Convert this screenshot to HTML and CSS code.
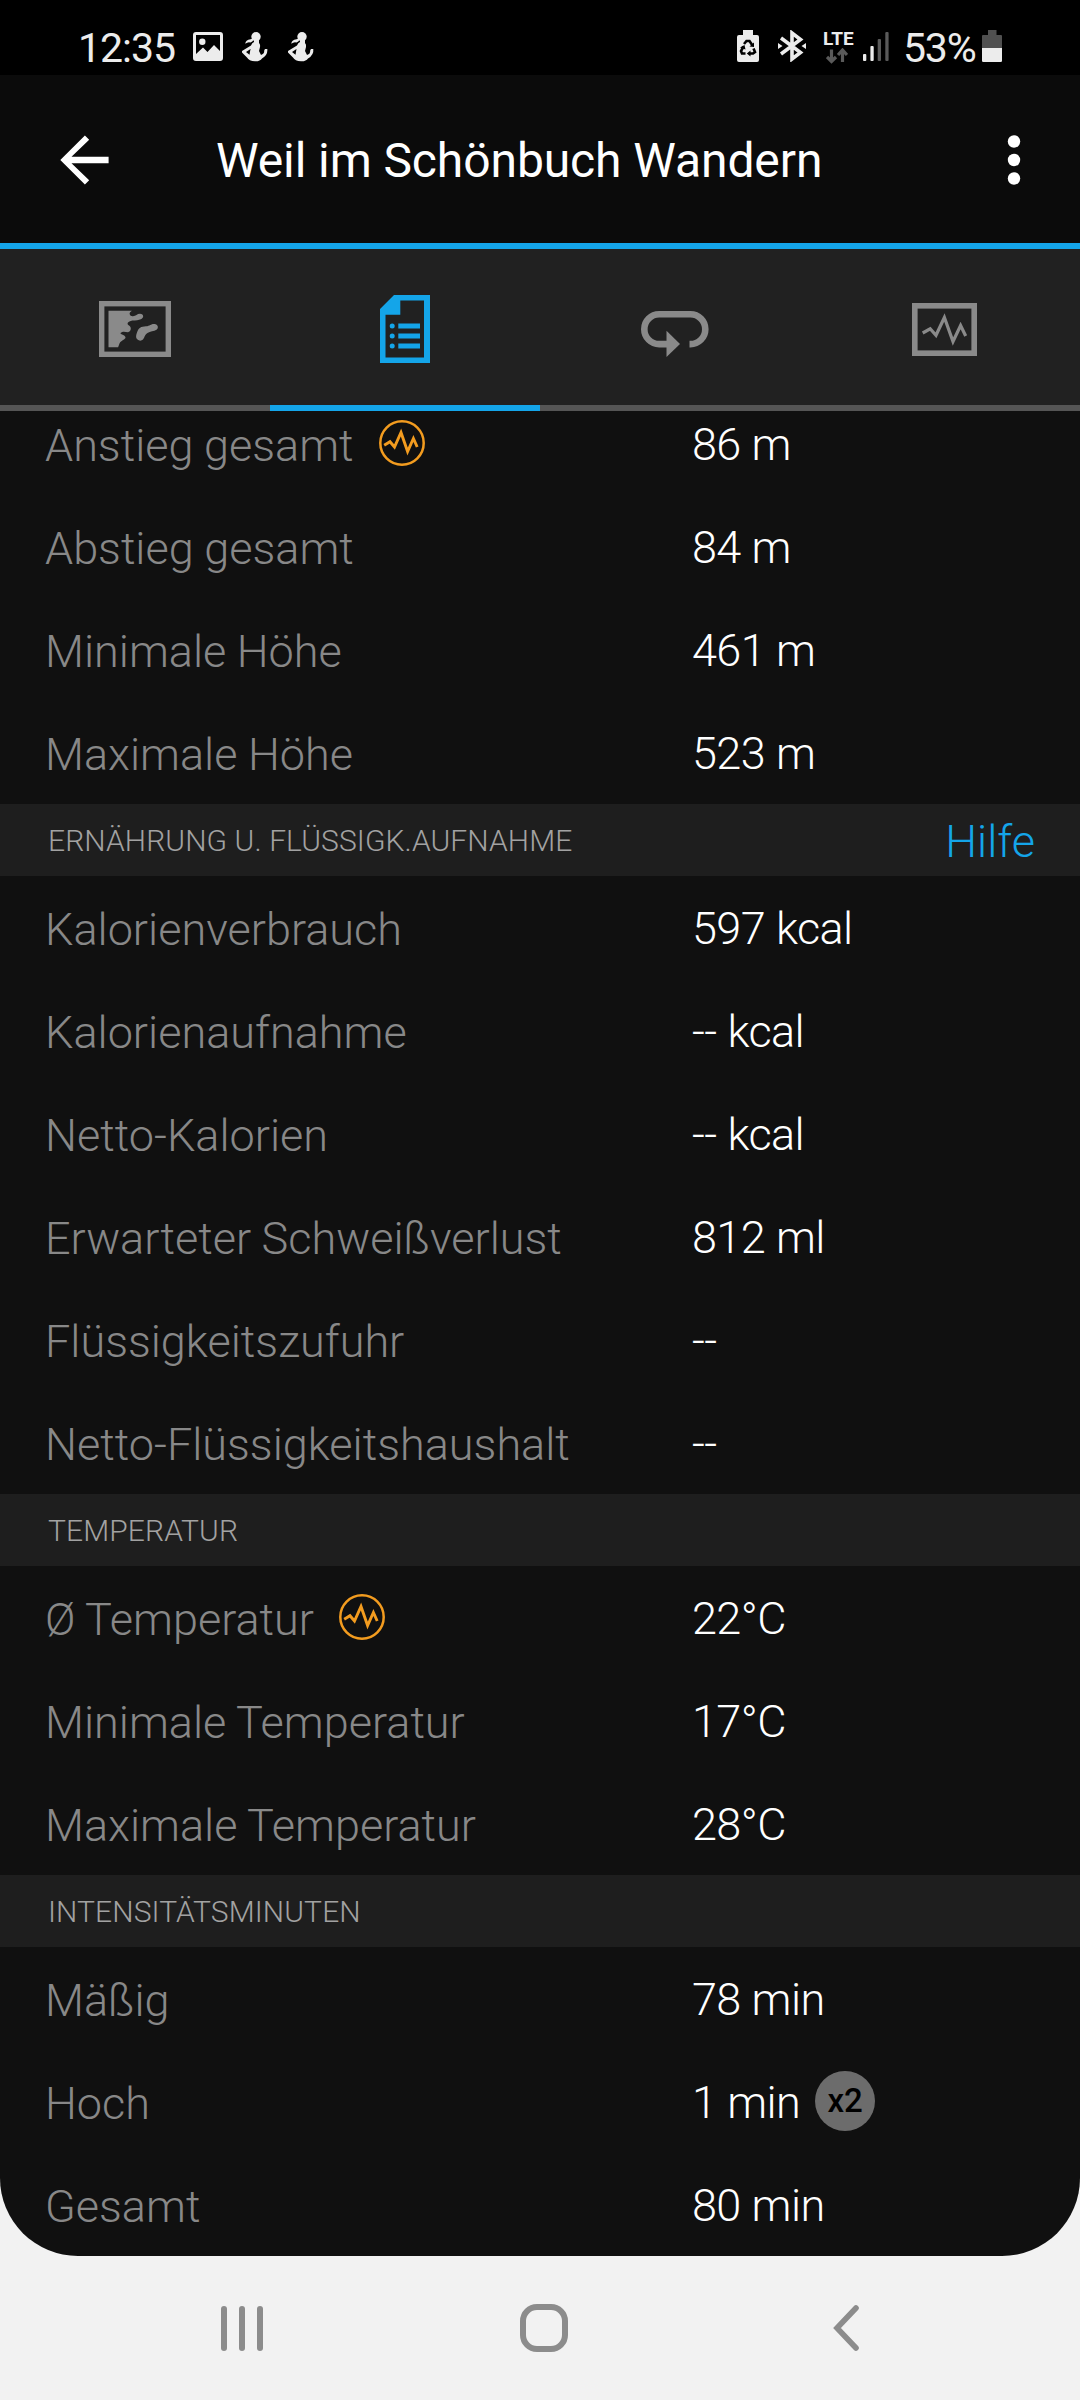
FILE: index.html
```
<!DOCTYPE html>
<html lang="de">
<head>
<meta charset="utf-8">
<title>Weil im Schönbuch Wandern</title>
<link rel="stylesheet" href="styles.css">
</head>
<body>
<svg class="defs" width="0" height="0">
  <defs>
    <symbol id="person" viewBox="0 0 26 30">
      <circle cx="14" cy="4.800" r="4.700"/>
      <path d="M11 6.500L8.500 7.200Q3.500 8 3.300 11.700Q6 9.500 8.500 10.500Q10.500 9.800 11.500 8Z"/>
      <path fill-rule="evenodd" d="M12 8H17V11Q18.500 12.500 18 15L17 19L19 23Q22.500 22 22.200 18.500L23 17H25.300Q26 23 20 26.500Q18 29.500 13 29.300Q7 29 5 25.500L0 20.500V19L9 13.500Q10 10.500 12 10ZM4 20L7.500 22.700L8.500 17Z"/>
    </symbol>
    <symbol id="wave" viewBox="0 0 46 46">
      <circle cx="23" cy="23" r="21.700" fill="none" stroke="#f39c1f" stroke-width="2.500"/>
      <path d="M5.200 25.200L11 21.700L15.500 27L22 12.500L28.600 31.500L34.400 18.500L38.200 27" fill="none" stroke="#f39c1f" stroke-width="2.900"/>
    </symbol>
  </defs>
</svg>
<div class="screen">
  <header class="status">
    <span class="clock">12:35</span>
    <svg class="ic-image" width="30" height="29" viewBox="0 0 30 29"><path fill-rule="evenodd" d="M3 0H27Q30 0 30 3V26Q30 29 27 29H3Q0 29 0 26V3Q0 0 3 0ZM3 3V22L10 15.500L14.500 20L21 13L27 19V3Z"/><circle cx="9.300" cy="9.700" r="3.200"/></svg>
    <svg class="ic-person" width="26" height="30"><use href="#person"/></svg>
    <svg class="ic-person second" width="26" height="30"><use href="#person"/></svg>
    <div class="status-right">
      <svg class="ic-saver" width="22" height="32" viewBox="0 0 22 32"><path d="M6 0H16V5H20Q22 5 22 7V30Q22 32 20 32H2Q0 32 0 30V7Q0 5 2 5H6Z"/><g fill="none" stroke="#000" stroke-width="2.600"><path d="M7 14L9.500 11H12.500L15.500 15.500M16.500 18.500L18 22L16 23.500H12.500M8.500 23.500H5L4 21L6.500 16.500"/></g><path fill="#000" d="M12.500 16.500L17 17V12.500ZM13.500 20.500V26.500L9.800 23.500ZM3 17.500L7.500 15L8.500 19.500Z"/></svg>
      <svg class="ic-bt" width="28" height="32" viewBox="0 0 28 32"><path d="M3 8L22.500 22.500L14 29V3L22.500 9.500L3 24" fill="none" stroke="#ececec" stroke-width="3.600"/><path d="M0 13L4.500 16L0 19ZM28 13L23.500 16L28 19Z"/></svg>
      <div class="lte"><span class="lte-text">LTE</span>
        <svg width="22" height="16" viewBox="0 0 22 16"><path d="M5.500 1.500V13M1 9L5.500 13.500L10 9M16.500 14V3M12 7L16.500 2L21 7" fill="none" stroke="#5a5a5a" stroke-width="3.200"/></svg>
      </div>
      <svg class="ic-signal" width="26" height="29" viewBox="0 0 26 29"><rect y="22" width="3.300" height="7" rx="1"/><rect x="7.400" y="14" width="3.300" height="15" rx="1"/><g fill="#5a5a5a"><rect x="14.700" y="7" width="3.300" height="22" rx="1"/><rect x="22.300" width="3.300" height="29" rx="1"/></g></svg>
      <span class="percent">53%</span>
      <svg class="ic-battery" width="20" height="32" viewBox="0 0 20 32"><path fill="#505050" d="M6 0H14.500V5H19Q20 5 20 6V18H0V6Q0 5 1 5H6Z"/><path d="M0 18H20V30.700Q20 32 18.700 32H1.300Q0 32 0 30.700Z"/></svg>
    </div>
  </header>

  <div class="appbar">
    <svg class="back" width="72" height="72" viewBox="0 0 24 24"><path fill="#fff" d="M20.200 10.900H7.830l5.900-5.690L12.300 3.800l-8.200 8.200 8.200 8.200 1.430-1.410L7.830 13.100H20.200z"/></svg>
    <h1 class="title">Weil im Schönbuch Wandern</h1>
    <svg class="more" width="14" height="50" viewBox="0 0 14 50"><g fill="#fff"><circle cx="7" cy="6.500" r="6.200"/><circle cx="7" cy="25" r="6.200"/><circle cx="7" cy="43.500" r="6.200"/></g></svg>
  </div>

  <nav class="tabs">
    <div class="tab">
      <svg width="72" height="56" viewBox="0 0 72 56"><rect x="2.700" y="2.700" width="66.600" height="50.600" fill="none" stroke="#8a8a8a" stroke-width="5.400"/><path fill="#8a8a8a" d="M9.500 9.700H32.900Q30 11.500 30.800 13.500Q31.200 15.500 34 15.300C37 15 38 12.700 41 12.700C45 13 45.500 17 41 18.600C37 20 34 19 31 20.300C28 21.500 28 23.500 30 24.500C33 26.500 32 30.500 29 31.300C26 31 24 30 21.500 32C21.500 34 26 33.500 26.500 36.300C26.500 39 22 39 20.500 42.500L19.100 46.300H9.500ZM38.500 38.500C36.500 37 37 34 38 31.500C39.500 27 42 25.500 47 25.300C51 25 52 22.800 55.500 23C59 23.300 60 27 57.500 28.700C55 30.300 51 30 48.500 32C45.500 34 46 36 44 38.500C42.500 40 40 40 38.500 38.500Z"/></svg>
    </div>
    <div class="tab active">
      <svg width="50" height="68" viewBox="0 0 50 68"><path fill="#14a5e9" fill-rule="evenodd" d="M14 0H50V68H0V14ZM20.300 5.500V19.800H5.500V62.500H44V5.500Z"/><g fill="#14a5e9"><circle cx="12.200" cy="31" r="2.500"/><circle cx="12.200" cy="41" r="2.500"/><circle cx="12.200" cy="51" r="2.500"/><path d="M18.300 28.600H40V33.400H18.300ZM18.300 38.600H40V43.400H18.300ZM18.300 48.600H40V53.400H18.300Z"/></g></svg>
    </div>
    <div class="tab">
      <svg class="loop" width="68" height="46" viewBox="0 0 68 46"><path d="M48.500 33.100H49.400A14.900 14.900 0 0 0 49.400 3.300H18.200A14.900 14.900 0 0 0 18.200 33.100H27" fill="none" stroke="#8a8a8a" stroke-width="6.600"/><path fill="#8a8a8a" d="M25.500 19.700L39 33.100L25.500 46Z"/></svg>
    </div>
    <div class="tab">
      <svg width="65" height="53" viewBox="0 0 65 53"><rect x="2.800" y="2.800" width="59.400" height="47.400" fill="none" stroke="#8a8a8a" stroke-width="5.600"/><path d="M10.700 30L18.200 25.800L24 32.300L32.400 14.500L41 38.500L48.600 22.500L53.700 33" fill="none" stroke="#8a8a8a" stroke-width="3.200"/></svg>
    </div>
  </nav>

  <main class="content">
    <div class="list">
      <div class="row"><span class="label">Anstieg gesamt</span><svg class="info" width="46" height="46"><use href="#wave"/></svg><span class="value">86 m</span></div>
      <div class="row"><span class="label">Abstieg gesamt</span><span class="value">84 m</span></div>
      <div class="row"><span class="label">Minimale Höhe</span><span class="value">461 m</span></div>
      <div class="row"><span class="label">Maximale Höhe</span><span class="value">523 m</span></div>
      <div class="section"><h2 class="section-title">ERNÄHRUNG U. FLÜSSIGK.AUFNAHME</h2><a class="help">Hilfe</a></div>
      <div class="row"><span class="label">Kalorienverbrauch</span><span class="value">597 kcal</span></div>
      <div class="row"><span class="label">Kalorienaufnahme</span><span class="value">-- kcal</span></div>
      <div class="row"><span class="label">Netto-Kalorien</span><span class="value">-- kcal</span></div>
      <div class="row"><span class="label">Erwarteter Schweißverlust</span><span class="value">812 ml</span></div>
      <div class="row"><span class="label">Flüssigkeitszufuhr</span><span class="value">--</span></div>
      <div class="row"><span class="label">Netto-Flüssigkeitshaushalt</span><span class="value">--</span></div>
      <div class="section"><h2 class="section-title">TEMPERATUR</h2></div>
      <div class="row"><span class="label">Ø Temperatur</span><svg class="info" width="46" height="46"><use href="#wave"/></svg><span class="value">22°C</span></div>
      <div class="row"><span class="label">Minimale Temperatur</span><span class="value">17°C</span></div>
      <div class="row"><span class="label">Maximale Temperatur</span><span class="value">28°C</span></div>
      <div class="section"><h2 class="section-title">INTENSITÄTSMINUTEN</h2></div>
      <div class="row"><span class="label">Mäßig</span><span class="value">78 min</span></div>
      <div class="row"><span class="label">Hoch</span><span class="value">1 min<span class="badge">x2</span></span></div>
      <div class="row"><span class="label">Gesamt</span><span class="value">80 min</span></div>
    </div>
  </main>
</div>

<footer class="navbar">
  <svg width="42" height="45" viewBox="0 0 42 45"><g fill="#8c8c8c"><rect width="6" height="45" rx="3"/><rect x="18" width="6" height="45" rx="3"/><rect x="36" width="6" height="45" rx="3"/></g></svg>
  <svg class="home" width="48" height="48" viewBox="0 0 48 48"><rect x="3" y="3" width="42" height="42" rx="14" fill="none" stroke="#8c8c8c" stroke-width="6"/></svg>
  <svg class="nav-back" width="26" height="46" viewBox="0 0 26 46"><path d="M23 3L4 23L23 43" fill="none" stroke="#8c8c8c" stroke-width="5.600" stroke-linecap="round"/></svg>
</footer>
</body>
</html>
```
FILE: styles.css
```
* { box-sizing: border-box; }
body {
  margin: 0;
  width: 1080px;
  height: 2400px;
  overflow: hidden;
  background: #f2f2f2;
  font-family: Roboto, "Liberation Sans", sans-serif;
}
svg { display: block; flex: none; }
h1, h2 { margin: 0; }
.defs { display: none; }

.screen {
  height: 2256px;
  display: flex;
  flex-direction: column;
  background: #101010;
  border-radius: 0 0 78px 78px;
  overflow: hidden;
}

.status {
  flex: none;
  height: 75px;
  padding: 0 78px;
  display: flex;
  align-items: flex-start;
  background: #000;
  color: #ececec;
  fill: #ececec;
}
.clock, .percent { font-size: 41px; line-height: 48px; white-space: nowrap; }
.clock { width: 115px; padding-top: 24px; letter-spacing: -1px; }
.ic-image { margin-top: 32px; }
.ic-person { margin: 32px 0 0 19px; }
.ic-person.second { margin-left: 20px; }
.status-right { margin-left: auto; display: flex; }
.ic-saver, .ic-bt, .ic-battery { margin-top: 30px; }
.ic-bt { margin-left: 19px; }
.lte { width: 30px; margin: 30px 0 0 17px; }
.lte-text { display: block; height: 18px; font-size: 19px; line-height: 18px; font-weight: 700; }
.lte svg { margin-left: 3px; }
.ic-signal { margin: 32px 0 0 10px; }
.percent { width: 79px; margin-left: 14px; padding-top: 24px; letter-spacing: -1.2px; }

.appbar {
  flex: none;
  height: 174px;
  padding: 1px 59px 0 48px;
  display: flex;
  align-items: center;
  background: #0b0b0b;
  border-bottom: 6px solid #14a5e9;
}
.title {
  flex: 1;
  margin-left: 96px;
  padding-top: 2px;
  font-size: 48px;
  line-height: 56px;
  font-weight: 400;
  letter-spacing: -0.1px;
  color: #fff;
}

.tabs { flex: none; height: 162px; display: grid; grid-template-columns: repeat(4, 1fr); background: #212121; }
.tab { display: flex; align-items: center; justify-content: center; border-bottom: 6px solid #555; padding: 4px 1px 0 0; }
.tab.active { border-color: #14a5e9; }
.loop { margin-top: 10px; }

/* The list is scrolled: its first row starts under the tab bar. */
.content { flex: 1; min-height: 0; display: flex; flex-direction: column; justify-content: flex-end; overflow: hidden; }
.row {
  height: 103px;
  padding-left: 45px;
  display: grid;
  grid-template-columns: auto 1fr 388px;
  align-items: start;
  font-size: 45px;
  line-height: 52px;
  font-weight: 300;
  color: #888;
}
.label { padding-top: 28px; white-space: nowrap; word-spacing: -0.5px; }
.info { margin: 28px 0 0 25px; }
.value {
  grid-column: 3;
  height: 103px;
  padding-top: 27px;
  display: flex;
  align-items: flex-start;
  color: #fff;
  white-space: nowrap;
  letter-spacing: -0.6px;
  word-spacing: 0.5px;
}
.badge {
  width: 60px;
  height: 60px;
  margin: -6px 0 0 15px;
  border-radius: 50%;
  background: #6c6c6c;
  color: #000;
  font-size: 33px;
  line-height: 60px;
  font-weight: 500;
  letter-spacing: 0;
  text-align: center;
}
.section { height: 72px; padding: 0 45px 0 48px; display: flex; justify-content: space-between; background: #1e1e1e; }
.section-title { padding-top: 19px; font-size: 30px; line-height: 35px; font-weight: 300; letter-spacing: 0.1px; color: #a2a2a2; }
.help { padding-top: 12px; font-size: 45px; line-height: 52px; font-weight: 300; color: #14a5e9; }

.navbar { height: 144px; padding: 0 221px; display: flex; align-items: center; justify-content: space-between; }
.home { margin-right: 8px; }
```
